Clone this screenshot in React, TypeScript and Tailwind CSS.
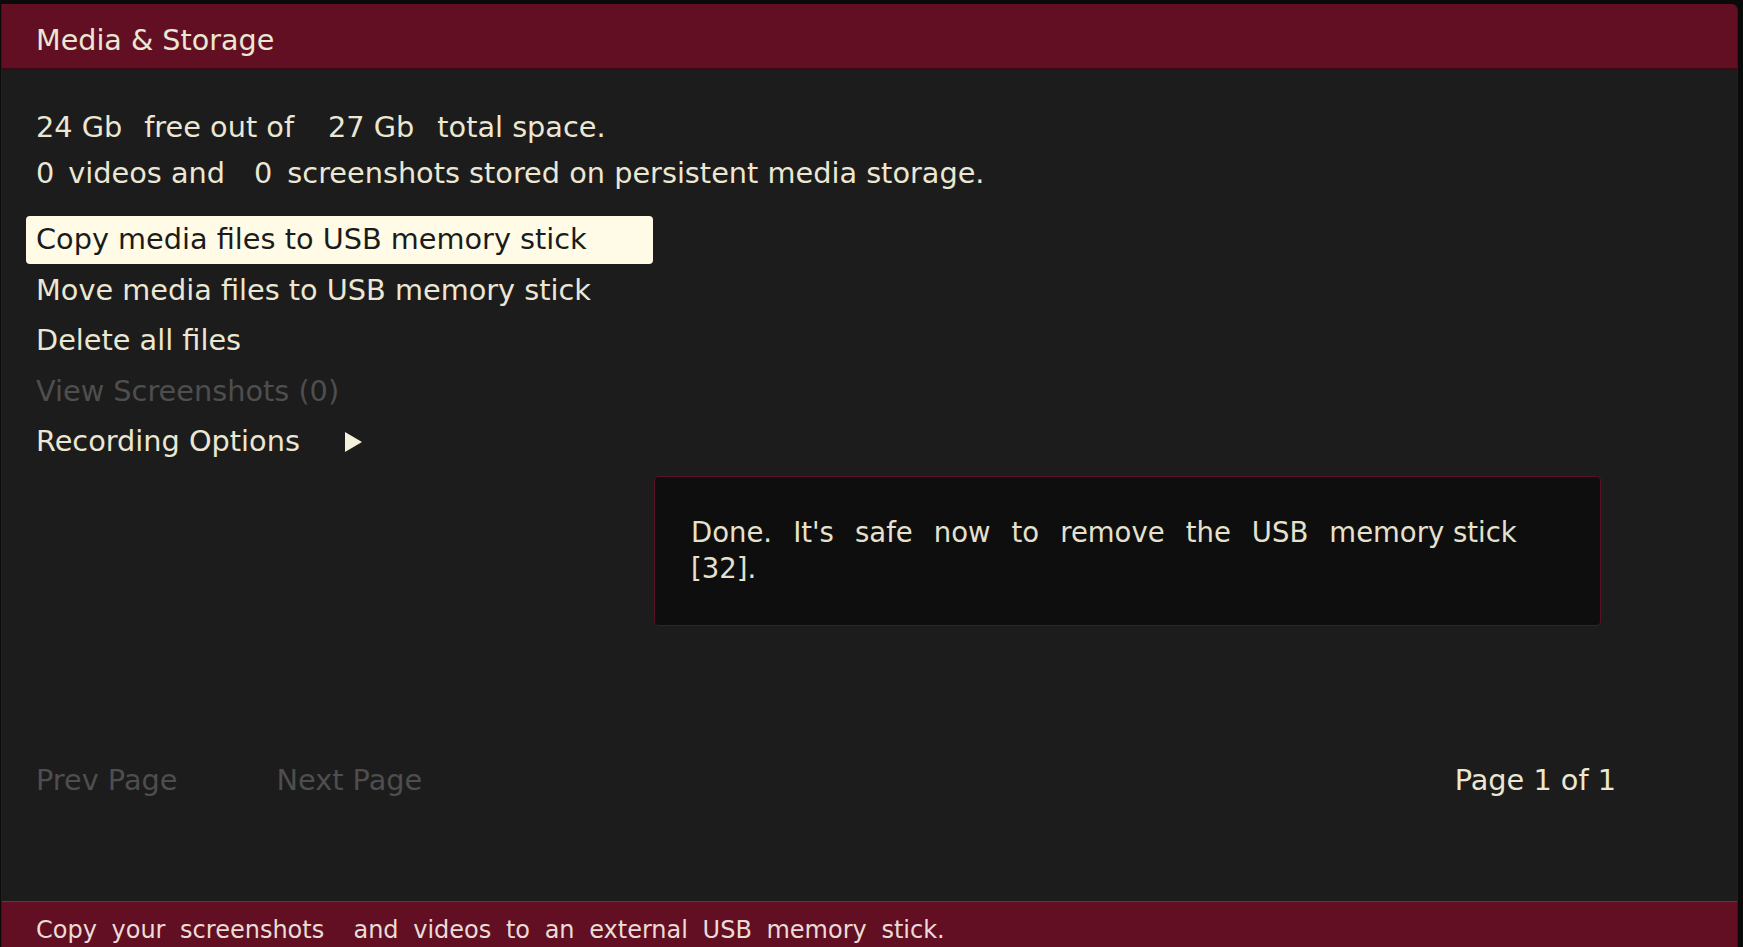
import React from "react";

const menu = [
  { label: "Copy media files to USB memory stick", selected: true },
  { label: "Move media files to USB memory stick" },
  { label: "Delete all files" },
  { label: "View Screenshots (0)", disabled: true },
  { label: "Recording Options", submenu: true },
];

const font = { fontFamily: '"DejaVu Sans", sans-serif' };

const App = () => (
  <div className="h-screen w-full bg-[#0a0a0a] pt-[4px] pl-[1px] pr-[5px] overflow-hidden" style={font}>
    <div className="h-full flex flex-col border-l border-r border-[#4a0d1b] bg-[#1c1c1c] rounded-tr-[6px] overflow-hidden">
      {/* Title bar */}
      <div className="h-[66px] shrink-0 flex items-center pt-[9px] px-[34px] bg-[#620f23] border-b-2 border-[#3c0813] text-[28.6px] text-[#ece7d3]">
        Media &amp; Storage
      </div>

      <div className="flex-1 flex flex-col pt-[34px] text-[28.75px] text-[#ece7d3]">
        <div className="pl-[34px] leading-[46px] whitespace-nowrap">
          <div>
            <span>24 Gb</span>
            <span className="ml-[22px]">free out of</span>
            <span className="ml-[34px]">27 Gb</span>
            <span className="ml-[23px]">total space.</span>
          </div>
          <div>
            <span>0</span>
            <span className="ml-[14px]">videos and</span>
            <span className="ml-[29px]">0</span>
            <span className="ml-[15px]">screenshots stored on persistent media storage.</span>
          </div>
        </div>

        <div className="mt-[20px] flex flex-col gap-[2.5px]">
          {menu.map((item) => (
            <div
              key={item.label}
              className={
                item.selected
                  ? "ml-[24px] w-[627px] h-[48px] flex items-center pl-[10px] rounded-[4px] bg-[#fffbe6] text-[#1b1b1b]"
                  : item.disabled
                  ? "ml-[24px] h-[48px] flex items-center pl-[10px] text-[#4e4e4e]"
                  : "ml-[24px] h-[48px] flex items-center pl-[10px]"
              }
            >
              {item.label}
              {item.submenu && (
                <svg className="ml-[44px]" width="18" height="20" viewBox="0 0 18 20">
                  <polygon points="1,0 18,10 1,20" fill="#f4f0dc" />
                </svg>
              )}
            </div>
          ))}
        </div>

        {/* Notification */}
        <div className="mt-[10px] ml-[652px] w-[947px] h-[150px] rounded-[4px] border border-[#5c1024] bg-[#0e0e0e] pt-[37px] pl-[36px] text-[27.5px] leading-[36px] text-[#e6e1cd]">
          <div className="[word-spacing:12.3px]">
            Done. It's safe now to remove the USB <span className="[word-spacing:0px]">memory stick</span>
          </div>
          <div>[32].</div>
        </div>

        {/* Paging */}
        <div className="mt-[132px] h-[46px] flex items-center pl-[34px] pr-[121px]">
          <span className="text-[#4e4e4e]">Prev Page</span>
          <span className="ml-[99px] text-[#4e4e4e]">Next Page</span>
          <span className="ml-auto">Page 1 of 1</span>
        </div>
      </div>

      {/* Help bar */}
      <div className="h-[46px] shrink-0 bg-[#620f23] border-t border-[#7b2b3c] pl-[34px] pt-[13px] text-[24px] leading-[30px] text-[#ecdcd6] [word-spacing:7px] whitespace-pre">
        Copy your screenshots  and videos to an external USB memory stick.
      </div>
    </div>
  </div>
);

export default App;
